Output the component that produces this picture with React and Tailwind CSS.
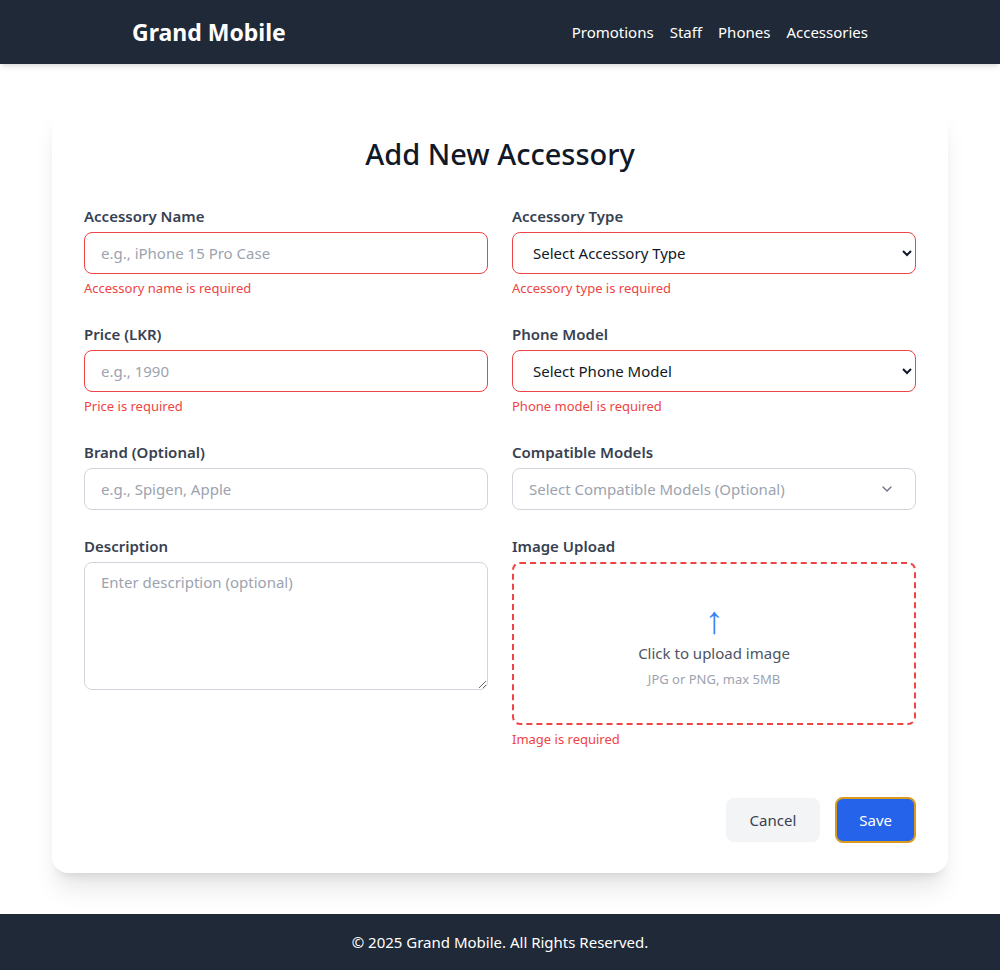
import { ChevronDown } from 'lucide-react';

const font = { fontFamily: '"Noto Sans", "Open Sans", sans-serif' };

function Field({ label, error, children }) {
    return (
        <div>
            <label className="mb-1 block text-[15px] leading-6 font-semibold text-[#374151]">{label}</label>
            {children}
            {error && <p className="mt-1 text-[13px] leading-5 text-[#ef4444]">{error}</p>}
        </div>
    );
}

const inputBase = 'h-[42px] w-full rounded-lg border bg-white px-4 text-[15px] text-[#111827] placeholder:text-[#9ca3af] outline-none';

export default function App() {
    return (
        <div className="flex min-h-screen flex-col bg-white" style={font}>
            <header className="h-16 bg-[#1f2937] shadow-md">
                <div className="mx-auto flex h-full w-[736px] items-center justify-between">
                    <span className="text-[23px] font-bold text-white">Grand Mobile</span>
                    <nav className="flex gap-4 text-[15px] text-white">
                        <a>Promotions</a>
                        <a>Staff</a>
                        <a>Phones</a>
                        <a>Accessories</a>
                    </nav>
                </div>
            </header>

            <main className="flex-1 py-10">
                <div className="mx-auto w-[896px] rounded-2xl bg-white px-8 pt-8 pb-[30px] shadow-xl">
                    <h1 className="mb-8 text-center text-[29px] leading-9 font-medium text-[#111827]">Add New Accessory</h1>
                    <form className="grid grid-cols-2 gap-x-6 gap-y-6">
                        <Field label="Accessory Name" error="Accessory name is required">
                            <input className={`${inputBase} border-[#ef4444]`} placeholder="e.g., iPhone 15 Pro Case" />
                        </Field>
                        <Field label="Accessory Type" error="Accessory type is required">
                            <select className={`${inputBase} border-[#ef4444]`}>
                                <option>Select Accessory Type</option>
                            </select>
                        </Field>
                        <Field label="Price (LKR)" error="Price is required">
                            <input className={`${inputBase} border-[#ef4444]`} placeholder="e.g., 1990" />
                        </Field>
                        <Field label="Phone Model" error="Phone model is required">
                            <select className={`${inputBase} border-[#ef4444]`}>
                                <option>Select Phone Model</option>
                            </select>
                        </Field>
                        <Field label="Brand (Optional)">
                            <input className={`${inputBase} border-[#d1d5db]`} placeholder="e.g., Spigen, Apple" />
                        </Field>
                        <Field label="Compatible Models">
                            <div className="flex h-[42px] w-full items-center justify-between rounded-lg border border-[#d1d5db] px-4 text-[15px] text-[#9ca3af]">
                                <span>Select Compatible Models (Optional)</span>
                                <ChevronDown className="mr-1 h-4 w-4 text-[#6b7280]" />
                            </div>
                        </Field>
                        <Field label="Description">
                            <textarea className="h-32 w-full rounded-lg border border-[#d1d5db] px-4 py-2 text-[15px] text-[#111827] placeholder:text-[#9ca3af] outline-none" placeholder="Enter description (optional)" />
                        </Field>
                        <Field label="Image Upload" error="Image is required">
                            <div className="flex h-[163px] flex-col items-center justify-center rounded-lg border-2 border-dashed border-[#ef4444]">
                                <span className="text-[38px] leading-10 text-[#3b82f6]">↑</span>
                                <p className="mt-1 text-[15px] text-[#4b5563]">Click to upload image</p>
                                <p className="mt-1.5 text-[13px] text-[#9ca3af]">JPG or PNG, max 5MB</p>
                            </div>
                        </Field>
                    </form>
                    <div className="mt-12 flex items-center justify-end gap-[15px]">
                        <button className="h-11 rounded-lg bg-[#f3f4f6] px-6 text-[15px] text-[#374151]">Cancel</button>
                        <button className="h-[46px] rounded-lg border-2 border-[#d99a1e] bg-[#2563eb] px-[22px] text-[15px] text-white">Save</button>
                    </div>
                </div>
            </main>

            <footer className="bg-[#1f2937] py-4 text-center text-[15px] leading-6 text-white">© 2025 Grand Mobile. All Rights Reserved.</footer>
        </div>
    );
}
